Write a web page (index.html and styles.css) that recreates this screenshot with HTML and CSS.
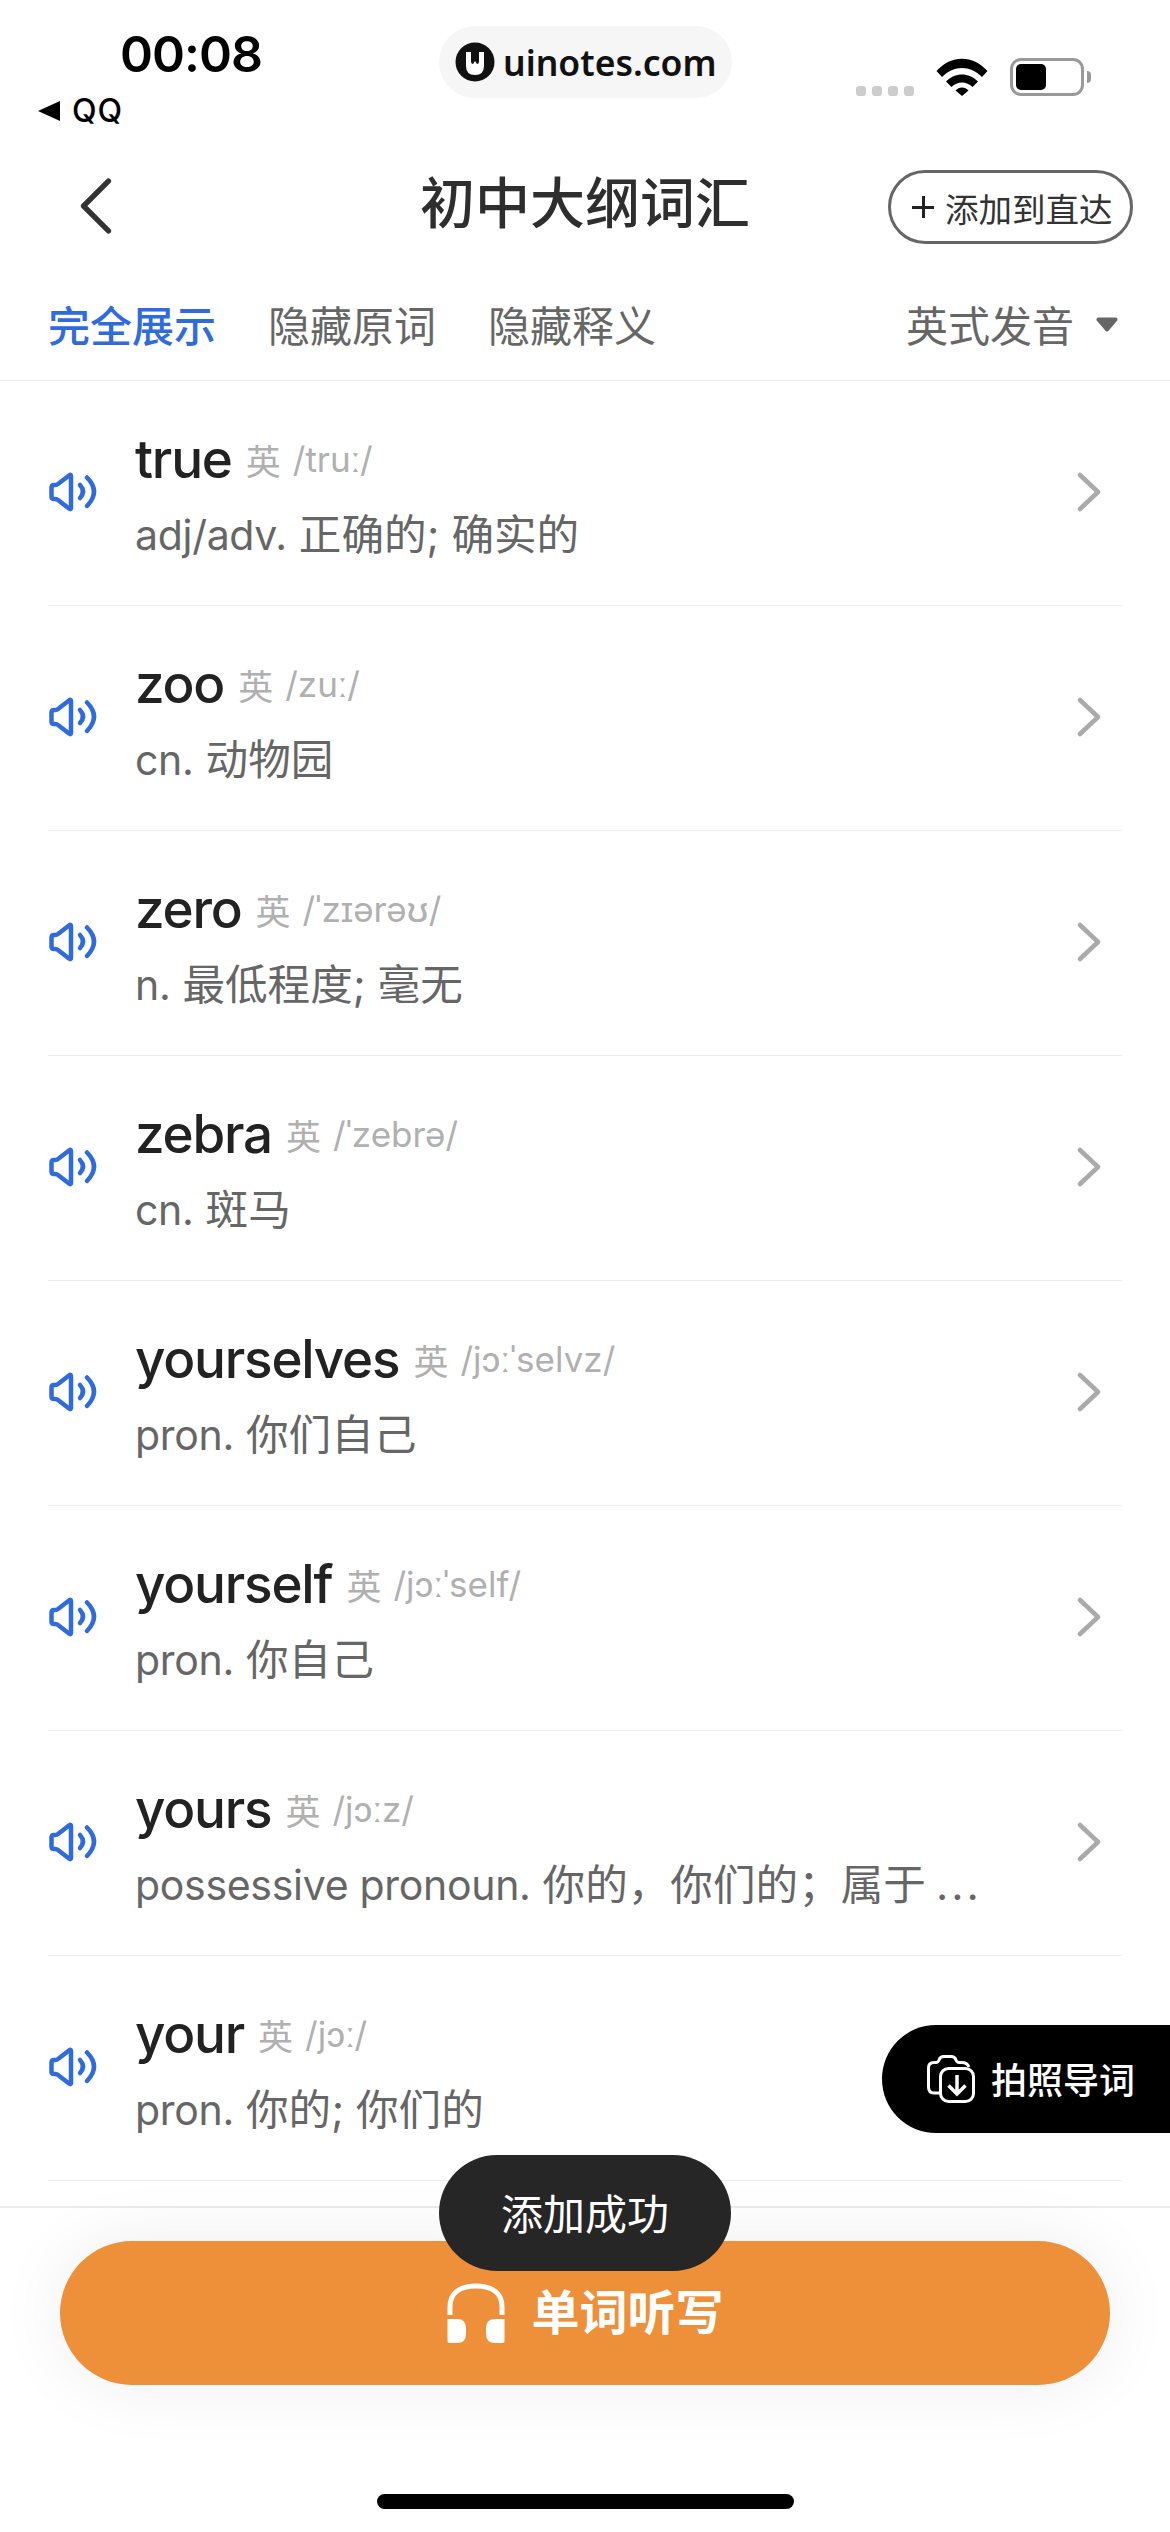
FILE: index.html
```html
<!DOCTYPE html>
<html lang="zh">
<head>
<meta charset="utf-8">
<title>初中大纲词汇</title>
<link rel="stylesheet" href="styles.css">
</head>
<body>
<svg class="defs" width="0" height="0" aria-hidden="true">
  <symbol id="speaker" viewBox="0 0 50 42">
    <path d="M23 5 Q23 3 21 4.500 L10 13 Q9 14 7 14 H6 Q3.500 14 3.500 16.500 V25.500 Q3.500 28 6 28 H7 Q9 28 10 29 L21 37.500 Q23 39 23 37 Z" fill="none" stroke="currentColor" stroke-width="4.500" stroke-linejoin="round"/>
    <path d="M32 14 Q38 20.500 32 27" fill="none" stroke="currentColor" stroke-width="4.500" stroke-linecap="round"/>
    <path d="M39 6.500 Q53 20.500 39 35" fill="none" stroke="currentColor" stroke-width="4.500" stroke-linecap="round"/>
  </symbol>
  <symbol id="chev" viewBox="0 0 24 40">
    <path d="M3 3 L21 20 L3 37" fill="none" stroke="currentColor" stroke-width="4.500" stroke-linecap="round" stroke-linejoin="round"/>
  </symbol>
</svg>

<header class="status">
  <div class="status-left">
    <div class="time">00:08</div>
    <div class="back-app"><span class="tri"></span>QQ</div>
  </div>
  <div class="pill">
    <svg class="logo" viewBox="0 0 40 40"><circle cx="20" cy="20" r="19.500" fill="#111"/><path d="M11 10 H16 V19 Q16 22 18 22 L20 19 L22 22 Q24 22 24 19 V10 H29 V24 Q29 33 20 33 Q11 33 11 24 Z" fill="#fff"/></svg>
    <span>uinotes.com</span>
  </div>
  <div class="status-right">
    <div class="dots"><i></i><i></i><i></i><i></i></div>
    <svg class="wifi" viewBox="0 0 52 38"><path d="M0.500 13 C15 -3.500 37 -3.500 51.500 13 L46 19 C34 7 18 7 6 19 Z" fill="#000"/><path d="M10 23.500 C19 14 33 14 42 23.500 L36.500 29 C30.500 23 21.500 23 15.500 29 Z" fill="#000"/><path d="M19.500 32.500 C23 28.500 29 28.500 32.500 32.500 L26 38 Z" fill="#000"/></svg>
    <div class="battery"><div class="level"></div></div>
    <div class="nub"></div>
  </div>
</header>

<nav class="nav">
  <svg class="back" viewBox="0 0 36 64"><path d="M32 4 L4 32 L32 60" fill="none" stroke="#333" stroke-width="6" stroke-linecap="round" stroke-linejoin="round"/></svg>
  <h1 class="title">初中大纲词汇</h1>
  <div class="add"><span class="plus"></span>添加到直达</div>
</nav>

<div class="tabs">
  <span class="tab active">完全展示</span>
  <span class="tab">隐藏原词</span>
  <span class="tab">隐藏释义</span>
  <span class="accent">英式发音<svg class="caret" viewBox="0 0 22 15"><path d="M2.500 2.500 H19.500 L11 12.500 Z" fill="#666" stroke="#666" stroke-width="4" stroke-linejoin="round"/></svg></span>
</div>

<main class="list">
  <div class="row">
    <svg class="spk"><use href="#speaker"/></svg>
    <div class="body">
      <div class="head"><span class="word">true</span><span class="lang">英</span><span class="ph">/truː/</span></div>
      <div class="mean"><span class="pos">adj/adv.</span> 正确的; 确实的</div>
    </div>
    <svg class="go"><use href="#chev"/></svg>
  </div>
  <div class="row">
    <svg class="spk"><use href="#speaker"/></svg>
    <div class="body">
      <div class="head"><span class="word">zoo</span><span class="lang">英</span><span class="ph">/zuː/</span></div>
      <div class="mean"><span class="pos">cn.</span> 动物园</div>
    </div>
    <svg class="go"><use href="#chev"/></svg>
  </div>
  <div class="row">
    <svg class="spk"><use href="#speaker"/></svg>
    <div class="body">
      <div class="head"><span class="word">zero</span><span class="lang">英</span><span class="ph">/ˈzɪərəʊ/</span></div>
      <div class="mean"><span class="pos">n.</span> 最低程度; 毫无</div>
    </div>
    <svg class="go"><use href="#chev"/></svg>
  </div>
  <div class="row">
    <svg class="spk"><use href="#speaker"/></svg>
    <div class="body">
      <div class="head"><span class="word">zebra</span><span class="lang">英</span><span class="ph">/ˈzebrə/</span></div>
      <div class="mean"><span class="pos">cn.</span> 斑马</div>
    </div>
    <svg class="go"><use href="#chev"/></svg>
  </div>
  <div class="row">
    <svg class="spk"><use href="#speaker"/></svg>
    <div class="body">
      <div class="head"><span class="word">yourselves</span><span class="lang">英</span><span class="ph">/jɔːˈselvz/</span></div>
      <div class="mean"><span class="pos">pron.</span> 你们自己</div>
    </div>
    <svg class="go"><use href="#chev"/></svg>
  </div>
  <div class="row">
    <svg class="spk"><use href="#speaker"/></svg>
    <div class="body">
      <div class="head"><span class="word">yourself</span><span class="lang">英</span><span class="ph">/jɔːˈself/</span></div>
      <div class="mean"><span class="pos">pron.</span> 你自己</div>
    </div>
    <svg class="go"><use href="#chev"/></svg>
  </div>
  <div class="row">
    <svg class="spk"><use href="#speaker"/></svg>
    <div class="body">
      <div class="head"><span class="word">yours</span><span class="lang">英</span><span class="ph">/jɔːz/</span></div>
      <div class="mean"><span class="pos">possessive pronoun.</span> 你的，你们的；属于<span class="more">...</span></div>
    </div>
    <svg class="go"><use href="#chev"/></svg>
  </div>
  <div class="row">
    <svg class="spk"><use href="#speaker"/></svg>
    <div class="body">
      <div class="head"><span class="word">your</span><span class="lang">英</span><span class="ph">/jɔː/</span></div>
      <div class="mean"><span class="pos">pron.</span> 你的; 你们的</div>
    </div>
    <svg class="go"><use href="#chev"/></svg>
  </div>
</main>

<footer class="bar">
  <div class="dictate">
    <svg class="phones" viewBox="0 0 60 60"><path d="M4 32 V24 C4 10 14 3 30 3 C46 3 56 10 56 24 V32" fill="none" stroke="#fff" stroke-width="5"/><path d="M1.500 36 H11 Q20 36 20 45 V51 Q20 60 11 60 H3 Q1.500 60 1.500 58 Z" fill="#fff"/><path d="M58.500 36 H49 Q40 36 40 45 V51 Q40 60 49 60 H57 Q58.500 60 58.500 58 Z" fill="#fff"/></svg>
    <span>单词听写</span>
  </div>
  <div class="home"></div>
</footer>

<div class="photo">
  <svg class="cam" viewBox="0 0 48 48"><path d="M13 38 H7 Q1.500 38 1.500 32 V13 Q1.500 7.500 7 7.500 H9 Q11 7.500 12 5 Q13 1.500 17 1.500 H24 Q28 1.500 29 5 Q30 7.500 32 7.500 H35 Q40 7.500 42 12" fill="none" stroke="#fff" stroke-width="3"/><rect x="13.500" y="13.500" width="33" height="33" rx="8" fill="#000" stroke="#fff" stroke-width="3"/><path d="M30 20 V38 M21.500 30.500 L30 39 L38.500 30.500" fill="none" stroke="#fff" stroke-width="3.500"/></svg>
  <span>拍照导词</span>
</div>
<div class="toast"><span>添加成功</span></div>
</body>
</html>
```

FILE: styles.css
```css
* { box-sizing: border-box; }
html, body { margin: 0; padding: 0; }
body {
  position: relative;
  width: 1170px;
  height: 2532px;
  overflow: hidden;
  background: #fff;
  display: flex;
  flex-direction: column;
  font-family: Inter, "Noto Sans CJK SC", sans-serif;
  color: #222;
}
.defs { position: absolute; }

.status {
  height: 150px;
  flex: none;
  display: flex;
  padding: 26px 79px 0 38px;
}
.status-left { width: 401px; flex: none; }
.time {
  margin-left: 82px;
  font-size: 50px;
  font-weight: 600;
  line-height: 56px;
  letter-spacing: -1px;
  color: #000;
}
.back-app {
  margin-top: 11px;
  display: flex;
  align-items: center;
  gap: 12px;
  font-size: 32px;
  font-weight: 500;
  line-height: 36px;
  letter-spacing: 1px;
  color: #000;
}
.tri {
  width: 0;
  height: 0;
  border-style: solid;
  border-width: 10px 22px 10px 0;
  border-color: transparent #000 transparent transparent;
}
.pill {
  width: 293px;
  height: 72px;
  flex: none;
  border-radius: 36px;
  background: #f6f6f6;
  display: flex;
  align-items: center;
  padding-left: 16px;
  gap: 8px;
  font-family: "Noto Sans", sans-serif;
  font-size: 35.500px;
  font-weight: 600;
  color: #111;
}
.logo { width: 40px; height: 40px; flex: none; }
.status-right {
  margin-left: auto;
  display: flex;
  align-items: flex-end;
  height: 70px;
}
.dots { display: flex; gap: 6px; }
.dots i { width: 10px; height: 10px; border-radius: 3px; background: #ccc; }
.wifi { width: 52px; height: 38px; margin-left: 22px; }
.battery {
  width: 74px;
  height: 38px;
  margin-left: 22px;
  border: 3px solid #999;
  border-radius: 11px;
  padding: 3px;
}
.level { width: 30px; height: 100%; border-radius: 5px; background: #000; }
.nub {
  width: 4px;
  height: 12px;
  margin: 0 0 13px 3px;
  background: #999;
  border-radius: 0 6px 6px 0;
}

.nav {
  flex: none;
  height: 114px;
  display: flex;
  align-items: center;
  padding: 0 37px 0 80px;
  position: relative;
}
.back { width: 32px; height: 62px; margin-bottom: 3px; }
.title {
  margin: 0;
  position: absolute;
  left: 0;
  right: 0;
  top: 0;
  height: 106px;
  line-height: 106px;
  text-align: center;
  font-size: 55px;
  font-weight: 500;
  color: #2e2e2e;
  pointer-events: none;
}
.add {
  margin-left: auto;
  width: 245px;
  height: 74px;
  border: 3px solid #666;
  border-radius: 37px;
  display: flex;
  align-items: center;
  padding-left: 21px;
  font-size: 33.500px;
  color: #333;
}
.plus {
  width: 22px;
  height: 22px;
  margin-right: 11px;
  background:
    linear-gradient(#222, #222) center / 100% 3px no-repeat,
    linear-gradient(#222, #222) center / 3px 100% no-repeat;
}

.tabs {
  flex: none;
  height: 117px;
  display: flex;
  align-items: center;
  gap: 52px;
  padding: 2px 52px 0 48px;
  border-bottom: 1px solid #eee;
  font-size: 42px;
  color: #666;
}
.tab.active { color: #2f6bdc; font-weight: 500; }
.accent { margin-left: auto; display: flex; align-items: center; gap: 22px; }
.caret { width: 22px; height: 15px; margin-top: 3px; }

.list { flex: 1; }
.row {
  height: 225px;
  margin: 0 48px;
  border-bottom: 1px solid #eee;
  display: flex;
  align-items: center;
  padding-bottom: 2px;
}
.spk { width: 50px; height: 42px; color: #2f6bdc; flex: none; }
.body { flex: 1; margin-left: 37px; min-width: 0; }
.head { display: flex; align-items: center; height: 70px; }
.word { font-size: 53px; font-weight: 500; letter-spacing: -1.200px; color: #222; line-height: 70px; }
.lang { font-size: 35px; color: #b0b0b0; margin-left: 14px; }
.ph { font-size: 35px; color: #b0b0b0; margin-left: 12px; }
.mean { font-size: 42.600px; color: #666; line-height: 50px; margin-top: 16px; white-space: nowrap; }
.pos { font-size: 41px; letter-spacing: -0.300px; }
.more { margin-left: 10px; letter-spacing: 3px; }
.go { width: 24px; height: 40px; color: #aaa; flex: none; margin-right: 21px; }

.bar {
  flex: none;
  height: 326px;
  border-top: 2px solid #ebebeb;
  padding: 33px 60px 0;
  display: flex;
  flex-direction: column;
}
.dictate {
  height: 144px;
  border-radius: 72px;
  background: #ee8f3a;
  box-shadow: 0 0 70px rgba(0, 0, 0, 0.07);
  color: #fff;
  display: flex;
  align-items: center;
  justify-content: center;
  gap: 25px;
  font-size: 48px;
  font-weight: 700;
}
.dictate span { padding-bottom: 8px; }
.phones { width: 60px; height: 60px; }
.home {
  width: 417px;
  height: 15px;
  margin: 109px auto 0;
  background: #000;
  border-radius: 8px;
}

.photo {
  position: absolute;
  left: 882px;
  top: 2025px;
  width: 288px;
  height: 108px;
  background: #000;
  border-radius: 54px 0 0 54px;
  color: #fff;
  display: flex;
  align-items: center;
  padding-left: 45px;
  gap: 16px;
  font-size: 36px;
  font-weight: 500;
}
.photo span { padding-bottom: 2px; }
.cam { width: 48px; height: 48px; }
.toast {
  position: absolute;
  left: 439px;
  top: 2155px;
  width: 292px;
  height: 116px;
  border-radius: 58px;
  background: #262626;
  color: #fff;
  font-size: 42px;
  display: flex;
  align-items: center;
  justify-content: center;
}
.toast span { padding-bottom: 4px; }
```
